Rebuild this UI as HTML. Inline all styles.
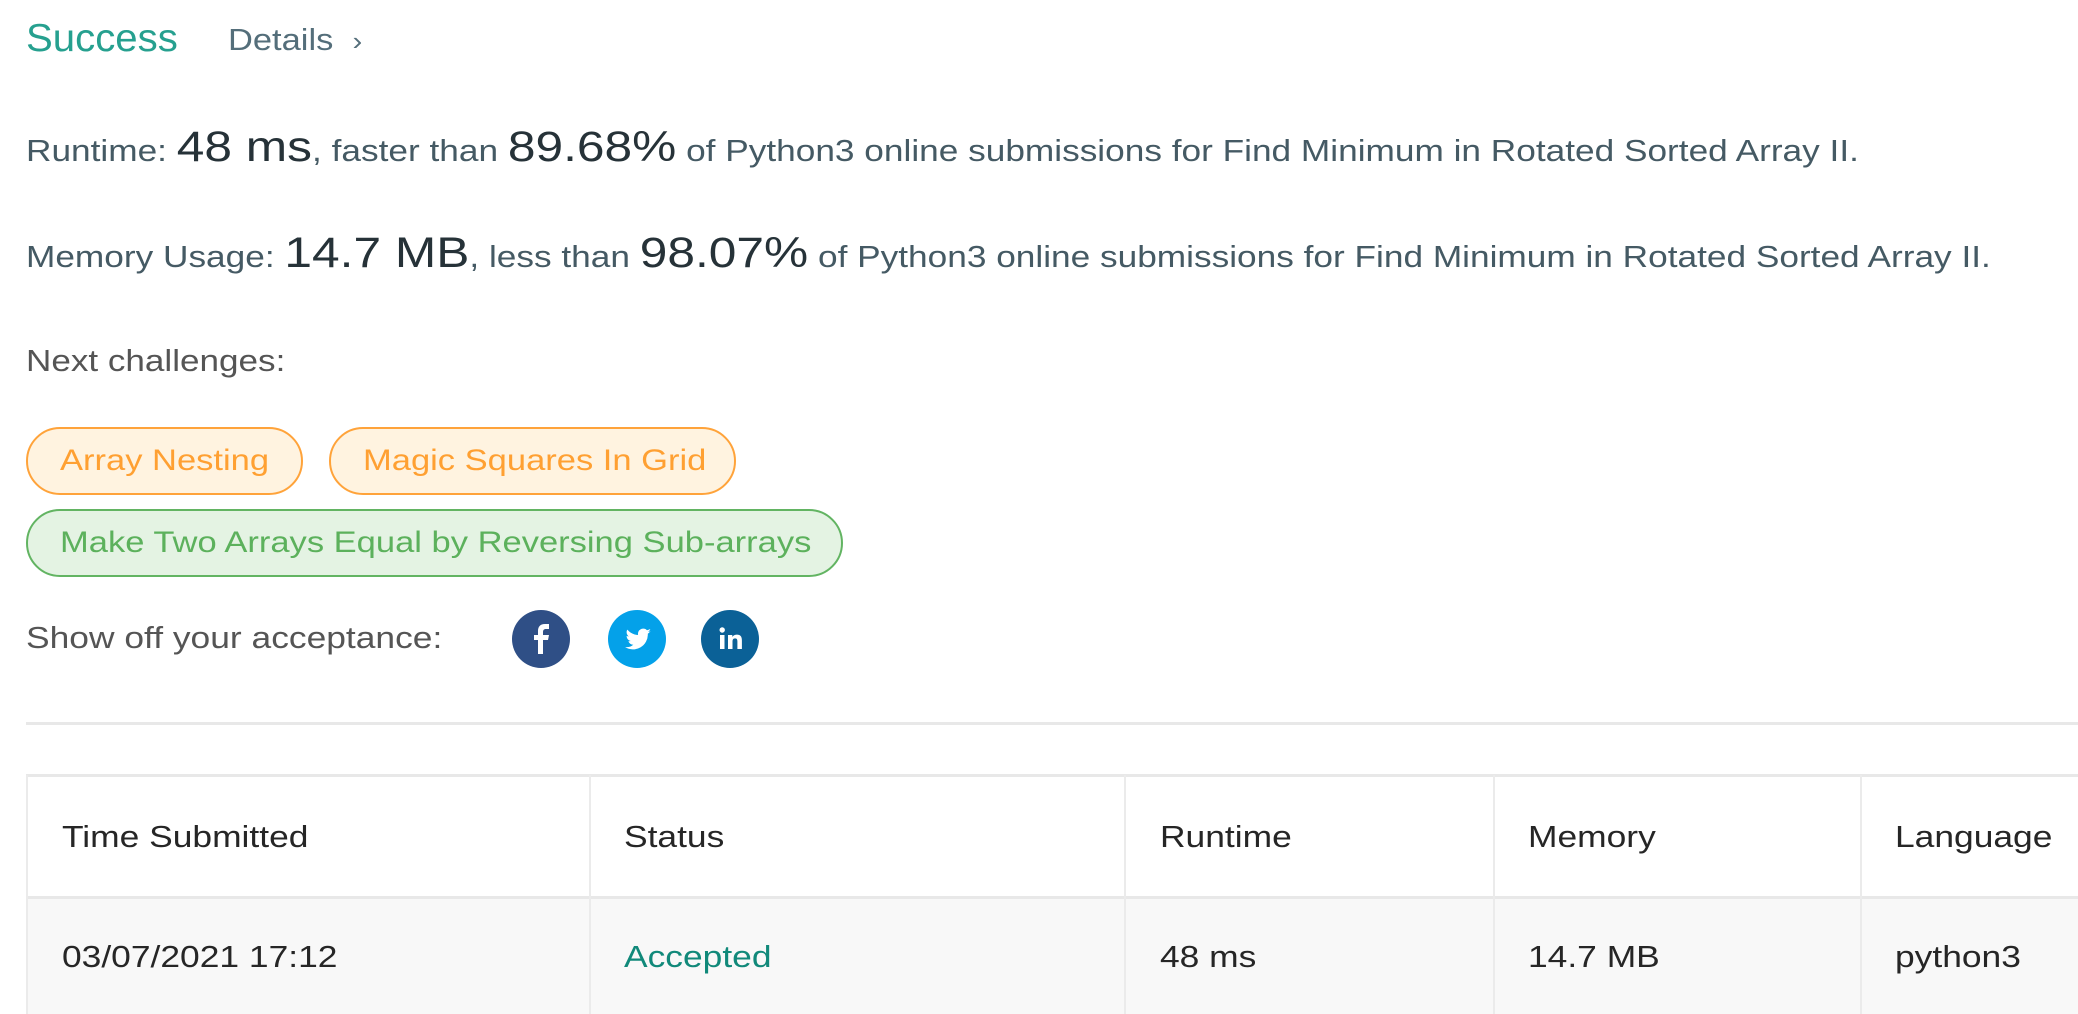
<!DOCTYPE html>
<html><head><meta charset="utf-8"><style>
*{margin:0;padding:0;box-sizing:border-box}
body{width:2078px;height:1014px;overflow:hidden;background:#fff;font-family:"Liberation Sans",sans-serif;position:relative;color:#455a64}
.a{position:absolute;white-space:nowrap;transform-origin:0 50%}
.s{transform:scaleX(1.16)}
.pill{position:absolute;height:68px;border-radius:34px;border:2px solid;font-size:29.5px;line-height:64px;padding:0 32px;white-space:nowrap}
.pill span{display:inline-block;transform:scaleX(1.17);transform-origin:0 50%}
.or{background:#fff3e0;border-color:#ffa33a;color:#ffa032}
.gr{background:#e4f3e3;border-color:#62b462;color:#5cb15c}
.big{font-size:43px;color:#263238}
.ic{position:absolute;width:58px;height:58px;border-radius:50%;top:610px}
.cell{position:absolute;font-size:30.5px;color:#262626;white-space:nowrap;transform:scaleX(1.16);transform-origin:0 50%}
.vl{position:absolute;width:2px;background:#ebebeb;top:775px;height:239px}
</style></head><body>
<div class="a" style="left:26px;top:17px;font-size:39px;color:#26a08f;transform:scaleX(1.03)">Success</div>
<div class="a" style="left:228px;top:23px;font-size:30.5px;color:#546e7a;transform:scaleX(1.13)">Details &nbsp;<span style="font-size:26px">›</span></div>
<div class="a" style="left:26px;top:122px;font-size:30.5px;line-height:50px;transform:scaleX(1.155)">Runtime: <span class="big">48 ms</span>, faster than <span class="big">89.68%</span> of Python3 online submissions for Find Minimum in Rotated Sorted Array II.</div>
<div class="a" style="left:26px;top:228px;font-size:30.5px;line-height:50px;transform:scaleX(1.155)">Memory Usage: <span class="big">14.7 MB</span>, less than <span class="big">98.07%</span> of Python3 online submissions for Find Minimum in Rotated Sorted Array II.</div>
<div class="a s" style="left:26px;top:344px;font-size:30.5px;color:#555;transform:scaleX(1.15)">Next challenges:</div>
<div class="pill or" style="left:26px;top:427px;width:277px"><span>Array Nesting</span></div>
<div class="pill or" style="left:329px;top:427px;width:407px"><span>Magic Squares In Grid</span></div>
<div class="pill gr" style="left:26px;top:509px;width:817px"><span>Make Two Arrays Equal by Reversing Sub-arrays</span></div>
<div class="a s" style="left:26px;top:621px;font-size:30.5px;color:#555">Show off your acceptance:</div>
<div class="ic" style="left:512px;background:#2f4f86"><svg width="58" height="58" viewBox="0 0 58 58"><path d="M31 44V30h5l1-5h-6v-3c0-2 1-3 3-3h3v-5h-4c-5 0-7 3-7 7v4h-4v5h4v14z" fill="#fff"/></svg></div>
<div class="ic" style="left:608px;background:#04a1e9"><svg width="58" height="58" viewBox="0 0 58 58"><path d="M43 21c-1 .5-2 .8-3 .9 1-.7 2-1.7 2.3-2.9-1 .6-2.2 1-3.3 1.3a5.2 5.2 0 0 0-8.9 4.7c-4.3-.2-8.2-2.3-10.8-5.4-1.4 2.4-.6 5.4 1.6 6.9-.8 0-1.6-.3-2.3-.6 0 2.5 1.8 4.7 4.2 5.1-.8.2-1.6.3-2.4.1.7 2.1 2.6 3.6 4.9 3.6A10.5 10.5 0 0 1 17 37a14.8 14.8 0 0 0 22.8-13.2c1.1-.8 2-1.7 2.7-2.8z" fill="#fff"/></svg></div>
<div class="ic" style="left:701px;background:#0b6197"><svg width="58" height="58" viewBox="0 0 58 58"><rect x="19" y="25" width="4.5" height="14" fill="#fff"/><circle cx="21.2" cy="20" r="2.7" fill="#fff"/><path d="M27 25h4.3v2c.8-1.4 2.4-2.4 4.6-2.4 3.8 0 5 2.3 5 6V39h-4.5v-7.4c0-1.8-.4-3.2-2.3-3.2s-2.6 1.4-2.6 3.2V39H27z" fill="#fff"/></svg></div>
<div class="a" style="left:26px;top:722px;width:2052px;height:3px;background:#e8e8e8"></div>
<div class="a" style="left:26px;top:774px;width:2052px;height:3px;background:#e8e8e8"></div>
<div class="a" style="left:26px;top:896px;width:2052px;height:3px;background:#e8e8e8"></div>
<div class="a" style="left:26px;top:899px;width:2052px;height:115px;background:#f8f8f8"></div>
<div class="vl" style="left:26px"></div><div class="vl" style="left:589px"></div><div class="vl" style="left:1124px"></div><div class="vl" style="left:1493px"></div><div class="vl" style="left:1860px"></div>
<div class="cell" style="left:62px;top:820px">Time Submitted</div>
<div class="cell" style="left:624px;top:820px">Status</div>
<div class="cell" style="left:1160px;top:820px">Runtime</div>
<div class="cell" style="left:1528px;top:820px">Memory</div>
<div class="cell" style="left:1895px;top:820px">Language</div>
<div class="cell" style="left:62px;top:940px">03/07/2021 17:12</div>
<div class="cell" style="left:624px;top:940px;color:#11897a">Accepted</div>
<div class="cell" style="left:1160px;top:940px">48 ms</div>
<div class="cell" style="left:1528px;top:940px">14.7 MB</div>
<div class="cell" style="left:1895px;top:940px">python3</div>
</body></html>
